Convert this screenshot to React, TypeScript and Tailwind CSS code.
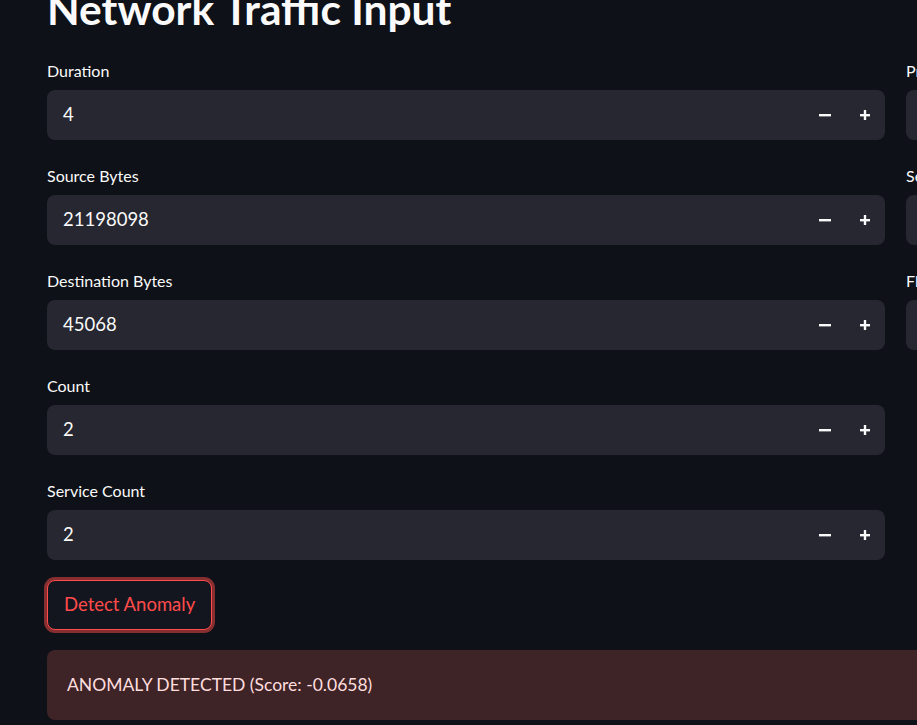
import React from 'react';

const font = { fontFamily: '"Lato", "Liberation Sans", sans-serif' };

const Minus = () => (
  <svg width="14" height="14" viewBox="0 0 14 14">
    <rect x="1" y="6" width="12" height="2.4" fill="#fafafa" />
  </svg>
);

const Plus = () => (
  <svg width="14" height="14" viewBox="0 0 14 14">
    <rect x="2" y="6" width="10" height="2.4" fill="#fafafa" />
    <rect x="5.8" y="2" width="2.4" height="10" fill="#fafafa" />
  </svg>
);

const FieldLabel = ({ children }: { children: React.ReactNode }) => (
  <div className="mb-[9px] mt-[26px] h-[20px] text-[16px] leading-[20px] text-[#fafafa]">{children}</div>
);

const NumberField = ({ label, value }: { label: string; value: string }) => (
  <div className="flex flex-col">
    <FieldLabel>{label}</FieldLabel>
    <div className="flex h-[50px] items-center rounded-lg bg-[#262730]">
      <div className="flex-1 pl-4 text-[18.5px] text-[#fafafa]">{value}</div>
      <div className="flex h-full w-10 items-center justify-center"><Minus /></div>
      <div className="flex h-full w-10 items-center justify-center"><Plus /></div>
    </div>
  </div>
);

const SelectField = ({ label }: { label: string }) => (
  <div className="flex flex-col">
    <FieldLabel>{label}</FieldLabel>
    <div className="h-[50px] rounded-lg bg-[#262730]" />
  </div>
);

export default function App() {
  return (
    <div className="h-[725px] w-[917px] overflow-hidden bg-[#0e1117]" style={font}>
      <div className="w-[1750px] pl-[47px]">
        {/* Title */}
        <h1 className="-mt-[19px] h-[54px] text-[42.5px] font-bold leading-[56px] text-[#fafafa]">
          Network Traffic Input
        </h1>

        {/* Columns */}
        <div className="flex gap-[21px]">
          <div className="flex w-[838px] flex-col">
            <NumberField label="Duration" value="4" />
            <NumberField label="Source Bytes" value="21198098" />
            <NumberField label="Destination Bytes" value="45068" />
            <NumberField label="Count" value="2" />
            <NumberField label="Service Count" value="2" />
          </div>
          <div className="flex w-[838px] flex-col">
            <SelectField label="Protocol Type" />
            <SelectField label="Service" />
            <SelectField label="Flag" />
          </div>
        </div>

        {/* Button */}
        <div className="pt-[20px]">
          <button className="h-[50px] rounded-lg border border-[#ff4b4b] bg-[#13161e] px-4 text-[18.5px] text-[#ff4b4b] shadow-[0_0_0_3px_rgba(255,75,75,0.5)]">
            Detect Anomaly
          </button>
        </div>

        {/* Alert */}
        <div className="mt-[20px] flex h-[70px] items-center rounded-lg bg-[#3e2327] px-5 text-[17.5px] text-[#ffdede]">
          ANOMALY DETECTED (Score: -0.0658)
        </div>
      </div>
    </div>
  );
}
